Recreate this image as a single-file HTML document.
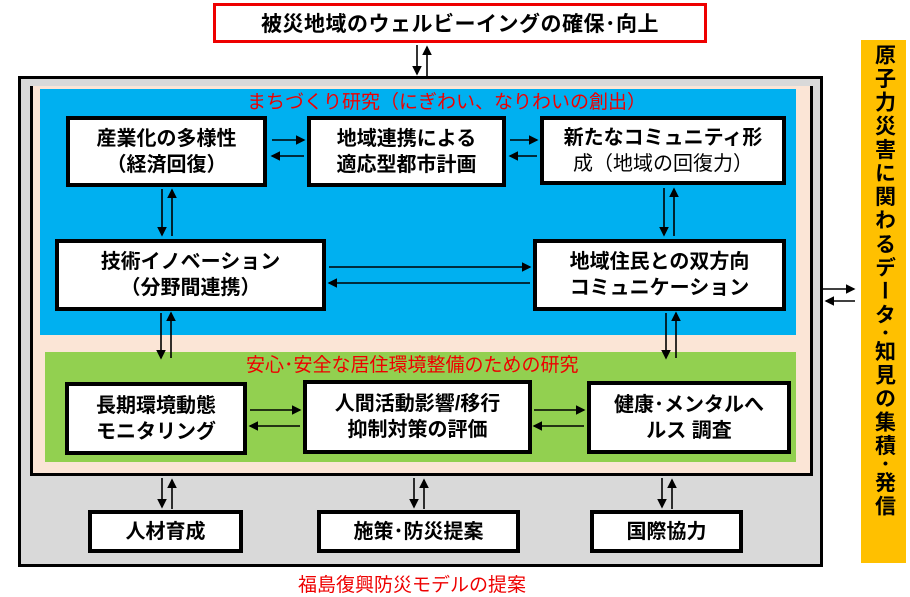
<!DOCTYPE html>
<html><head><meta charset="utf-8"><style>
body{margin:0;width:910px;height:581px;overflow:hidden;background:#fff;position:relative;font-family:"Liberation Sans","Noto Sans CJK JP",sans-serif}
div{position:absolute;box-sizing:border-box}
.b{background:#fff;border:4px solid #000;display:flex;flex-direction:column;align-items:center;justify-content:center;font-weight:bold;font-size:20px;line-height:26px;text-align:center;color:#000;white-space:nowrap}
.r{color:#e00;font-size:18px;white-space:nowrap}
svg{position:absolute;left:0;top:0}
</style></head><body>
<div style="left:213px;top:3px;width:494px;height:40px;border:3px solid #e00;display:flex;align-items:center;justify-content:center;font-weight:bold;font-size:21px;letter-spacing:0.5px">被災地域のウェルビーイングの確保･向上</div>
<div style="left:18px;top:76px;width:805px;height:491px;background:#d9d9d9;border:3px solid #000"></div>
<div style="left:30px;top:86px;width:783px;height:390px;background:#fbe5d6;border:3px solid #000;border-top:none"></div>
<div style="left:40px;top:89px;width:756px;height:246px;background:#00b0f0"></div>
<div style="left:45px;top:352px;width:751px;height:110px;background:#92d050"></div>
<div class="r" style="left:247px;top:87px;font-size:19px">まちづくり研究（にぎわい、なりわいの創出）</div>
<div class="r" style="left:246px;top:350px;font-size:19px">安心･安全な居住環境整備のための研究</div>
<div class="b" style="left:66px;top:116px;width:201px;height:71px">産業化の多様性<br>（経済回復）</div>
<div class="b" style="left:307px;top:116px;width:199px;height:71px">地域連携による<br>適応型都市計画</div>
<div class="b" style="left:540px;top:116px;width:246px;height:69px">新たなコミュニティ形<br><span style="font-weight:normal">成（地域の回復力）</span></div>
<div class="b" style="left:55px;top:239px;width:271px;height:72px">技術イノベーション<br>（分野間連携）</div>
<div class="b" style="left:533px;top:239px;width:253px;height:72px">地域住民との双方向<br>コミュニケーション</div>
<div class="b" style="left:65px;top:382px;width:182px;height:73px">長期環境動態<br>モニタリング</div>
<div class="b" style="left:303px;top:380px;width:229px;height:74px">人間活動影響/移行<br>抑制対策の評価</div>
<div class="b" style="left:587px;top:381px;width:204px;height:73px">健康･メンタルへ<br>ルス 調査</div>
<div class="b" style="left:88px;top:510px;width:155px;height:43px">人材育成</div>
<div class="b" style="left:317px;top:510px;width:203px;height:43px">施策･防災提案</div>
<div class="b" style="left:590px;top:510px;width:153px;height:43px">国際協力</div>
<div style="left:861px;top:40px;width:45px;height:523px;background:#ffc000;font-weight:bold;font-size:21px;line-height:24px;letter-spacing:2.6px;writing-mode:vertical-rl;display:flex;align-items:center;justify-content:flex-start;padding-top:4px">原子力災害に関わるデータ･知見の集積･発信</div>
<div class="r" style="left:298px;top:570px;font-size:19px">福島復興防災モデルの提案</div>
<svg width="910" height="581">
<defs><marker id="a" markerWidth="6" markerHeight="6" refX="5" refY="3" orient="auto"><path d="M0,0L6,3L0,6z"/></marker></defs>
<g stroke="#000" stroke-width="1.6" marker-end="url(#a)">
<line x1="417" y1="45" x2="417" y2="74"/><line x1="427" y1="76" x2="427" y2="47"/>
<line x1="272" y1="140" x2="304" y2="140"/><line x1="304" y1="156" x2="272" y2="156"/>
<line x1="510" y1="140" x2="537" y2="140"/><line x1="537" y1="156" x2="510" y2="156"/>
<line x1="162" y1="189" x2="162" y2="235"/><line x1="172" y1="236" x2="172" y2="190"/>
<line x1="664" y1="188" x2="664" y2="235"/><line x1="674" y1="236" x2="674" y2="189"/>
<line x1="329" y1="267" x2="530" y2="267"/><line x1="530" y1="283" x2="329" y2="283"/>
<line x1="161" y1="313" x2="161" y2="358"/><line x1="171" y1="358" x2="171" y2="313"/>
<line x1="666" y1="313" x2="666" y2="358"/><line x1="676" y1="358" x2="676" y2="313"/>
<line x1="250" y1="410" x2="300" y2="410"/><line x1="300" y1="426" x2="250" y2="426"/>
<line x1="534" y1="410" x2="584" y2="410"/><line x1="584" y1="426" x2="534" y2="426"/>
<line x1="162" y1="478" x2="162" y2="507"/><line x1="172" y1="509" x2="172" y2="480"/>
<line x1="414" y1="478" x2="414" y2="507"/><line x1="424" y1="509" x2="424" y2="480"/>
<line x1="662" y1="478" x2="662" y2="507"/><line x1="672" y1="509" x2="672" y2="480"/>
<line x1="823" y1="289" x2="854" y2="289"/><line x1="855" y1="301" x2="826" y2="301"/>
</g></svg>
</body></html>
